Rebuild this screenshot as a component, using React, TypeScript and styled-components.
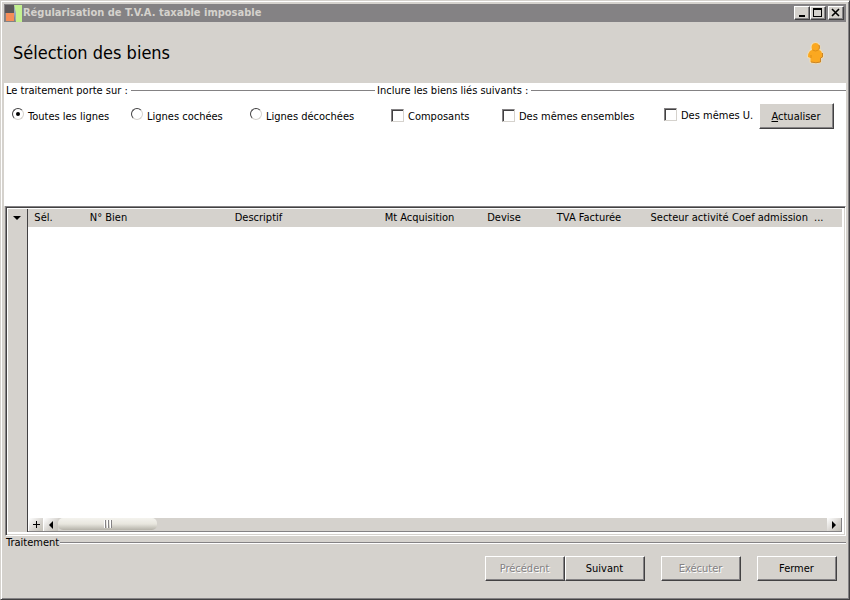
import React, { useState } from "react";
import styled, { createGlobalStyle, css } from "styled-components";

const face = "#d5d2cd";
const shade = "#848284";
const dark = "#424142";

const GlobalStyle = createGlobalStyle`
  *, *::before, *::after { box-sizing: border-box; }
  html, body { margin: 0; padding: 0; }
  body, button, input {
    font-family: "DejaVu Sans Condensed", "DejaVu Sans", sans-serif;
    font-size: 11px;
    line-height: 14px;
    color: #000;
  }
`;

const raised = css`
  border: 1px solid;
  border-color: #fff ${dark} ${dark} #fff;
  box-shadow: inset -1px -1px 0 ${shade};
`;

const Window = styled.div`
  display: flex;
  flex-direction: column;
  min-height: 100vh;
  padding: 3px;
  background: ${face};
  border: 1px solid;
  border-color: ${face} ${dark} ${dark} ${face};
  box-shadow: inset 1px 1px 0 #fff, inset -1px -1px 0 ${shade};
`;

const TitleBar = styled.header`
  display: flex;
  align-items: center;
  height: 18px;
  padding: 0 2px 0 1px;
  background: ${shade};
  color: ${face};
`;

const TitleText = styled.h1`
  flex: 1;
  margin: 0 0 0 1px;
  font-size: 11px;
  line-height: 18px;
  font-weight: bold;
`;

const CaptionButton = styled.button<{ $gap?: boolean }>`
  display: flex;
  align-items: center;
  justify-content: center;
  width: 16px;
  height: 14px;
  margin-left: ${(p) => (p.$gap ? "2px" : "0")};
  padding: 0 1px 1px 0;
  background: ${face};
  ${raised}
`;

const Banner = styled.div`
  display: flex;
  align-items: center;
  justify-content: space-between;
  height: 61px;
  padding: 1px 22px 0 9px;
`;

const Heading = styled.h2`
  margin: 0;
  font-size: 18px;
  line-height: 24px;
  font-weight: normal;
`;

const Options = styled.div`
  display: grid;
  grid-template-columns: 371px 1fr;
  height: 123px;
  background: #fff;
`;

const Group = styled.section`
  min-width: 0;
`;

const Legend = styled.h3<{ $etched?: boolean }>`
  display: flex;
  align-items: center;
  gap: ${(p) => (p.$etched ? "1px" : "3px")};
  margin: 0;
  padding-left: 2px;
  font-size: 11px;
  line-height: ${(p) => (p.$etched ? "14px" : "15px")};
  font-weight: normal;
  &::after {
    content: "";
    flex: 1;
    height: ${(p) => (p.$etched ? "2px" : "1px")};
    background: ${shade};
    border-bottom: ${(p) => (p.$etched ? "1px solid #fff" : "0")};
  }
`;

const RadioRow = styled.div`
  display: grid;
  grid-template-columns: repeat(3, 119px);
  padding: 10px 0 0 8px;
`;

const CheckRow = styled.div`
  display: grid;
  grid-template-columns: 111px 162px 95px 75px;
  align-items: start;
  padding: 5px 0 0 16px;
`;

const Choice = styled.label<{ $top?: number }>`
  display: flex;
  align-items: flex-start;
  gap: 4px;
  padding-top: ${(p) => p.$top ?? 0}px;
  white-space: nowrap;
`;

const ChoiceText = styled.span<{ $top?: number }>`
  padding-top: ${(p) => p.$top ?? 0}px;
`;

const Radio = styled.input.attrs({ type: "radio" })`
  appearance: none;
  display: grid;
  place-items: center;
  width: 12px;
  height: 12px;
  margin: 0;
  border: 1px solid;
  border-color: ${dark} ${face} ${face} ${dark};
  border-radius: 50%;
  background: #fff;
  &:checked::before {
    content: "";
    width: 4px;
    height: 4px;
    border-radius: 50%;
    background: #000;
  }
`;

const Check = styled.input.attrs({ type: "checkbox" })`
  appearance: none;
  width: 13px;
  height: 13px;
  margin: 0;
  border: 1px solid;
  border-color: ${shade} ${face} ${face} ${shade};
  box-shadow: inset 1px 1px 0 ${dark};
  background: #fff;
  &:checked {
    background: linear-gradient(#000, #000) center / 5px 5px no-repeat #fff;
  }
`;

const PushButton = styled.button`
  width: 80px;
  height: 25px;
  padding: 1px 1px 0 0;
  background: ${face};
  ${raised}
  &:disabled {
    color: ${shade};
    text-shadow: 1px 1px 0 #fff;
  }
`;

const RefreshButton = styled(PushButton)`
  width: 75px;
  height: 26px;
`;

const GridFrame = styled.main`
  display: flex;
  flex: 1;
  min-height: 200px;
  margin-left: 1px;
  padding: 1px 1px 2px 0;
  background: #fff;
  border: 1px solid;
  border-color: ${shade} #fff #fff ${shade};
  box-shadow: inset 1px 1px 0 ${dark}, inset -1px -1px 0 ${face};
  padding: 2px 2px 3px 1px;
`;

const Rail = styled.div`
  width: 21px;
  background: ${face};
  border-left: 1px solid #fff;
  border-right: 1px solid ${dark};
`;

const RailButton = styled.button`
  display: flex;
  align-items: center;
  justify-content: center;
  width: 100%;
  height: 18px;
  padding: 0 2px 0 0;
  border: 0;
  background: transparent;
`;

const GridBody = styled.div`
  display: flex;
  flex: 1;
  flex-direction: column;
  justify-content: space-between;
  min-width: 0;
  padding-right: 1px;
`;

const Table = styled.table`
  width: 100%;
  table-layout: fixed;
  border-collapse: collapse;
`;

const HeadCell = styled.th<{ $width?: number; $start?: boolean }>`
  width: ${(p) => (p.$width ? `${p.$width}px` : "auto")};
  height: 18px;
  padding: ${(p) => (p.$start ? "0 0 0 3px" : "0")};
  background: ${face};
  font-weight: normal;
  text-align: ${(p) => (p.$start ? "left" : "center")};
  white-space: nowrap;
`;

const ScrollBar = styled.div`
  display: flex;
  height: 14px;
  background: ${face};
  border-bottom: 1px solid ${shade};
`;

const ScrollButton = styled.button<{ $edge?: boolean }>`
  display: flex;
  align-items: center;
  justify-content: center;
  width: 15px;
  padding: 0;
  border: 0;
  border-right: ${(p) => (p.$edge ? `1px solid ${shade}` : "0")};
  border-left: ${(p) => (p.$edge ? "0" : "1px solid #fff")};
  background: linear-gradient(135deg, #fff, ${face} 60%, #c4c1b8);
`;

const ScrollTrack = styled.div`
  flex: 1;
`;

const Thumb = styled.div`
  display: flex;
  align-items: center;
  justify-content: center;
  gap: 1px;
  width: 99px;
  height: 12px;
  border-radius: 5px;
  background: linear-gradient(#f4f3ee, #e8e6de 50%, #b5b2a9);
`;

const Grip = styled.span`
  width: 2px;
  height: 8px;
  border-left: 1px solid #fff;
  border-right: 1px solid ${shade};
`;

const Footer = styled.footer`
  padding-bottom: 15px;
`;

const Actions = styled.div`
  display: flex;
  justify-content: flex-end;
  gap: 16px;
  padding: 6px 9px 0 0;
`;

const Pair = styled.div`
  display: flex;
`;

function Logo() {
  return (
    <svg width="17" height="17" viewBox="0 0 17 17" aria-hidden="true">
      <rect width="9" height="8" fill="#5b5758" />
      <rect x="1" y="8" width="8" height="8" fill="#f58d58" />
      <path d="M9 0h8v17h-6z" fill="#c3f08f" />
      <path d="M9 0v9l2 8V8z" fill="#97a5bd" />
    </svg>
  );
}

function Person() {
  return (
    <svg width="17" height="22" viewBox="0 0 17 22" aria-hidden="true">
      <path
        d="M5 7Q4 5 5 3Q6 1 8.500 1Q11 1 12 3Q13 5 12 7L14 9Q16 12 16 15L13.500 16L13.500 20Q9 22 3.500 20L3.500 16L1 15Q1 11 3 9Z"
        fill="#fba820"
        stroke="#f3ddb0"
        strokeWidth="2"
        strokeLinejoin="round"
      />
      <path
        d="M5 8Q4 5 5 3Q6 1 8.500 1Q11 1 12 3Q13 5 12 8L14 9Q16 12 15.500 15L13.500 16L13.500 20Q9 21.500 3.500 20L3.500 16L1 15Q1 11 3 9Z"
        fill="#fba820"
      />
      <path d="M12 3Q13 5 12 7.500M15.500 11L15.500 15L13.500 16V20Q9 21.500 4 20" fill="none" stroke="#c98428" />
      <path d="M5.500 8Q8.500 10 11.500 8M4 13V16" fill="none" stroke="#e08f16" />
    </svg>
  );
}

type ArrowKind = "down" | "left" | "right";
const arrows: Record<ArrowKind, string> = {
  down: "M0 2h8L4 6z",
  left: "M6 0v8L2 4z",
  right: "M2 0v8l4-4z",
};

function Arrow({ kind }: { kind: ArrowKind }) {
  return (
    <svg width="8" height="8" viewBox="0 0 8 8" aria-hidden="true">
      <path d={arrows[kind]} fill="#000" />
    </svg>
  );
}

const scopes = ["Toutes les lignes", "Lignes cochées", "Lignes décochées"];

const columns = [
  { label: "Sél.", width: 31 },
  { label: "N° Bien", width: 99 },
  { label: "Descriptif", width: 201 },
  { label: "Mt Acquisition", width: 121 },
  { label: "Devise", width: 48 },
  { label: "TVA Facturée", width: 122 },
  { label: "Secteur activité", width: 79 },
  { label: "Coef admission", width: 82 },
];

export default function App() {
  const [scope, setScope] = useState(scopes[0]);
  return (
    <>
      <GlobalStyle />
      <Window>
        <TitleBar>
          <Logo />
          <TitleText>Régularisation de T.V.A. taxable imposable</TitleText>
          <CaptionButton aria-label="Réduire">
            <svg width="10" height="9" viewBox="0 0 10 9"><path d="M2 7h6v2H2z" /></svg>
          </CaptionButton>
          <CaptionButton aria-label="Agrandir">
            <svg width="10" height="9" viewBox="0 0 10 9">
              <path d="M0 0h9v9H0zM1 2v6h7V2z" fillRule="evenodd" />
            </svg>
          </CaptionButton>
          <CaptionButton aria-label="Fermer la fenêtre" $gap>
            <svg width="10" height="9" viewBox="0 0 10 9">
              <path d="M1 1l7 7M8 1L1 8" stroke="#000" strokeWidth="1.600" />
            </svg>
          </CaptionButton>
        </TitleBar>
        <Banner>
          <Heading>Sélection des biens</Heading>
          <Person />
        </Banner>
        <Options>
          <Group>
            <Legend>Le traitement porte sur :</Legend>
            <RadioRow>
              {scopes.map((label) => (
                <Choice key={label}>
                  <Radio name="scope" checked={scope === label} onChange={() => setScope(label)} />
                  <ChoiceText $top={2}>{label}</ChoiceText>
                </Choice>
              ))}
            </RadioRow>
          </Group>
          <Group>
            <Legend>Inclure les biens liés suivants :</Legend>
            <CheckRow>
              <Choice $top={6}>
                <Check />
                <ChoiceText $top={1}>Composants</ChoiceText>
              </Choice>
              <Choice $top={6}>
                <Check />
                <ChoiceText $top={1}>Des mêmes ensembles</ChoiceText>
              </Choice>
              <Choice $top={5}>
                <Check />
                <ChoiceText $top={1}>Des mêmes U.</ChoiceText>
              </Choice>
              <RefreshButton>
                <u>A</u>ctualiser
              </RefreshButton>
            </CheckRow>
          </Group>
        </Options>
        <GridFrame>
          <Rail>
            <RailButton aria-label="Options de la liste">
              <Arrow kind="down" />
            </RailButton>
          </Rail>
          <GridBody>
            <Table>
              <thead>
                <tr>
                  {columns.map((c) => (
                    <HeadCell key={c.label} $width={c.width} scope="col">
                      {c.label}
                    </HeadCell>
                  ))}
                  <HeadCell $start scope="col">...</HeadCell>
                </tr>
              </thead>
            </Table>
            <ScrollBar>
              <ScrollButton aria-label="Ajouter">
                <svg width="7" height="7" viewBox="0 0 7 7"><path d="M3 0h1v3h3v1H4v3H3V4H0V3h3z" /></svg>
              </ScrollButton>
              <ScrollButton aria-label="Défiler à gauche">
                <Arrow kind="left" />
              </ScrollButton>
              <ScrollTrack>
                <Thumb>
                  <Grip />
                  <Grip />
                  <Grip />
                </Thumb>
              </ScrollTrack>
              <ScrollButton aria-label="Défiler à droite" $edge>
                <Arrow kind="right" />
              </ScrollButton>
            </ScrollBar>
          </GridBody>
        </GridFrame>
        <Footer>
          <Legend $etched>Traitement</Legend>
          <Actions>
            <Pair>
              <PushButton disabled>Précédent</PushButton>
              <PushButton>Suivant</PushButton>
            </Pair>
            <PushButton disabled>Exécuter</PushButton>
            <PushButton>Fermer</PushButton>
          </Actions>
        </Footer>
      </Window>
    </>
  );
}
